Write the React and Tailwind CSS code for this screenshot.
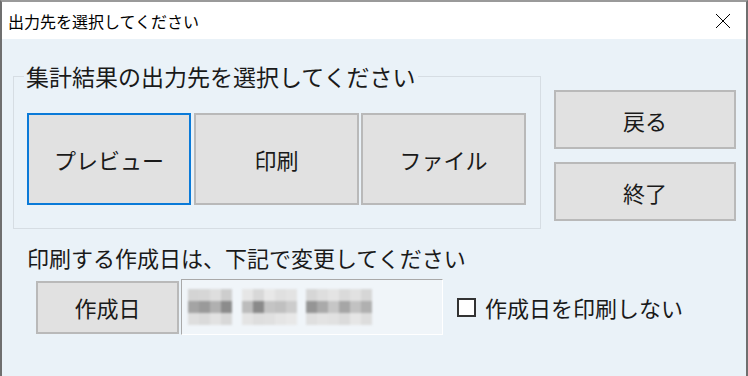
import React from 'react';

const font = { fontFamily: '"Noto Sans CJK JP", "Noto Sans", sans-serif' };

// pixelated blur of the date value: shades per column, per group
const blurGroups = [
  { ml: 'ml-[6px]', cols: [['#d4d4d4', '#a4a4a4', '#dedede'], ['#d6d6d6', '#9a9a9a', '#dadada'], ['#dedede', '#b0b0b0', '#e2e2e2'], ['#cdcdcd', '#8c8c8c', '#d8d8d8']] },
  { ml: 'ml-[10px]', cols: [['#e6e6e6', '#bcbcbc', '#e4e4e4'], ['#d8d8d8', '#8a8a8a', '#dedede'], ['#e8e8e8', '#c4c4c4', '#e0e0e0'], ['#e0e0e0', '#c0c0c0', '#e5e5e5'], ['#e3e3e3', '#cccccc', '#e8e8e8']] },
  { ml: 'ml-[9px]', cols: [['#d6d6d6', '#959595', '#dfdfdf'], ['#dedede', '#aaaaaa', '#e3e3e3'], ['#e4e4e4', '#c6c6c6', '#e1e1e1'], ['#dadada', '#a6a6a6', '#dbdbdb'], ['#e1e1e1', '#c2c2c2', '#e6e6e6'], ['#d6d6d6', '#b0b0b0', '#dddddd']] },
];

const Btn = ({ children, className = '' }) => (
  <button className={`flex items-center justify-center bg-[#e1e1e1] border-2 text-[22px] leading-none text-[#1a1a1a] ${className}`}>
    {children}
  </button>
);

export default function App() {
  return (
    <div className="w-[748px] h-[376px] overflow-hidden bg-[#eaf2f8] flex flex-col border-t-2 border-t-[#9a9a9a] border-x-2 border-x-[#6f6f6f]" style={font}>
      {/* title bar */}
      <div className="h-[37px] bg-white flex items-center justify-between pl-[6px] pr-[15px] shrink-0">
        <span className="text-[16px] leading-none text-black">出力先を選択してください</span>
        <svg width="16" height="16" viewBox="0 0 16 16" className="text-black">
          <path d="M1 1 L15 15 M15 1 L1 15" stroke="currentColor" strokeWidth="1" fill="none" />
        </svg>
      </div>

      <div className="flex flex-col pt-[26px]">
        <div className="flex items-start">
          <fieldset className="ml-[11px] w-[528px] border border-[#d6dde3] pl-[13px] pr-[13px] pb-[23px]">
            <legend className="-ml-[3px] px-[2px] text-[23px] leading-[22px] h-[22px] text-[#1a1a1a]">集計結果の出力先を選択してください</legend>
            <div className="flex mt-[26px] gap-[2px]">
              <Btn className="w-[164px] h-[92px] border-[#0a7ad8] mr-[1px]">プレビュー</Btn>
              <Btn className="w-[165px] h-[92px] border-[#b9b9b9]">印刷</Btn>
              <Btn className="w-[165px] h-[92px] border-[#b9b9b9]">ファイル</Btn>
            </div>
          </fieldset>
          <div className="flex flex-col gap-[13px] ml-[13px] mt-[25px]">
            <Btn className="w-[182px] h-[59px] border-[#b9b9b9]">戻る</Btn>
            <Btn className="w-[182px] h-[59px] border-[#b9b9b9]">終了</Btn>
          </div>
        </div>

        <div className="ml-[25px] mt-[17px] text-[22px] leading-[22px] h-[22px] text-[#1a1a1a]">印刷する作成日は、下記で変更してください</div>

        <div className="flex items-center mt-[11px] ml-[34px]">
          <Btn className="w-[143px] h-[53px] border-[#b9b9b9]">作成日</Btn>
          <div className="ml-[2px] w-[262px] h-[56px] bg-[#f0f5f9] border border-t-[#a9a9a9] border-l-[#a9a9a9] border-r-white border-b-white flex items-center">
            {blurGroups.map((g, gi) => (
              <div key={gi} className={`flex ${g.ml} blur-[0.8px]`}>
                {g.cols.map((c, ci) => (
                  <div key={ci} className="flex flex-col w-[11px]">
                    {c.map((shade, si) => (
                      <div key={si} className="h-[12px]" style={{ background: shade }} />
                    ))}
                  </div>
                ))}
              </div>
            ))}
          </div>
          <div className="ml-[14px] w-[19px] h-[19px] bg-white border-2 border-[#333]" />
          <span className="ml-[9px] text-[22px] leading-none text-[#1a1a1a]">作成日を印刷しない</span>
        </div>
      </div>
    </div>
  );
}
